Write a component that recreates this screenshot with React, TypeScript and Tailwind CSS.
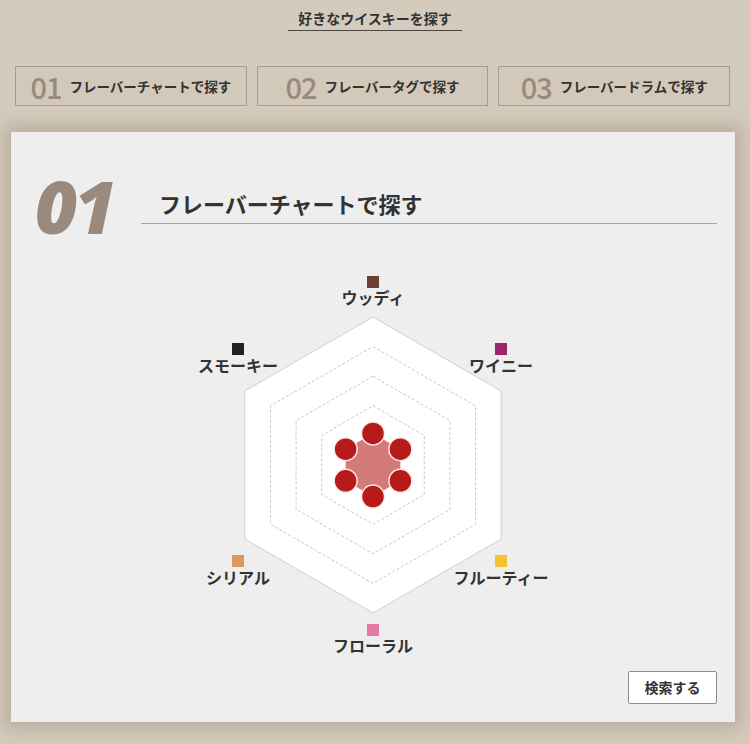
import { useMemo } from 'react';

const JP = '"Noto Sans CJK JP", "Noto Sans", sans-serif';

interface Axis {
  label: string;
  color: string;
  value: number;
}

// clockwise from the top
const AXES: Axis[] = [
  { label: 'ウッディ', color: '#6b3f33', value: 1 },
  { label: 'ワイニー', color: '#9c2668', value: 1 },
  { label: 'フルーティー', color: '#f2c232', value: 1 },
  { label: 'フローラル', color: '#e57aa8', value: 1 },
  { label: 'シリアル', color: '#d99a5c', value: 1 },
  { label: 'スモーキー', color: '#222222', value: 1 },
];

const TABS = [
  { no: '01', label: 'フレーバーチャートで探す' },
  { no: '02', label: 'フレーバータグで探す' },
  { no: '03', label: 'フレーバードラムで探す' },
];

const SIZE = 400;
const CX = 200;
const CY = 200;
const R = 148;
const LEVELS = 5;

function point(i: number, r: number) {
  const a = (Math.PI / 3) * i - Math.PI / 2;
  return [CX + r * Math.cos(a), CY + r * Math.sin(a)];
}

function hexPath(r: number) {
  return AXES.map((_, i) => point(i, r).join(',')).join(' ');
}

function FlavorChart() {
  const data = useMemo(
    () => AXES.map((a, i) => point(i, (R / LEVELS) * a.value + 2)),
    []
  );

  // label anchors (square top-left + text baseline), relative to chart box
  const labels = [
    { sx: 194, sy: 11, tx: 200, ty: 39 },
    { sx: 322, sy: 78, tx: 328, ty: 107 },
    { sx: 322, sy: 290, tx: 328, ty: 319 },
    { sx: 194, sy: 359, tx: 200, ty: 387 },
    { sx: 59, sy: 290, tx: 65, ty: 319 },
    { sx: 59, sy: 78, tx: 65, ty: 107 },
  ];

  return (
    <svg width={SIZE} height={SIZE} viewBox={`0 0 ${SIZE} ${SIZE}`} className="block">
      <polygon points={hexPath(R)} fill="#ffffff" stroke="#cfcfcf" strokeWidth={1} />
      {[4, 3, 2].map((l) => (
        <polygon
          key={l}
          points={hexPath((R / LEVELS) * l)}
          fill="none"
          stroke="#c9c9c9"
          strokeWidth={1}
          strokeDasharray="3 2"
        />
      ))}
      <polygon points={data.map((p) => p.join(',')).join(' ')} fill="#d47b7a" />
      {data.map(([x, y], i) => (
        <circle key={i} cx={x} cy={y} r={11.5} fill="#b71a1a" stroke="#fbe9e7" strokeWidth={1.5} />
      ))}
      {AXES.map((a, i) => (
        <g key={a.label}>
          <rect x={labels[i].sx} y={labels[i].sy} width={12} height={12} fill={a.color} />
          <text
            x={labels[i].tx}
            y={labels[i].ty}
            textAnchor="middle"
            fontFamily={JP}
            fontWeight={700}
            fontSize={16}
            fill="#333333"
          >
            {a.label}
          </text>
        </g>
      ))}
    </svg>
  );
}

export default function App() {
  return (
    <div className="min-h-[744px] bg-[#d4cbbd]" style={{ fontFamily: JP }}>
      {/* Page title */}
      <div className="flex justify-center pt-[9px]">
        <h2 className="border-b border-[#4a4540] px-[10px] pb-[3px] text-[14px] leading-[18px] font-bold text-[#333]">
          好きなウイスキーを探す
        </h2>
      </div>

      {/* Search mode tabs */}
      <div className="mt-[35px] flex gap-[10px] pl-[15px] pr-[20px]">
        {TABS.map((t) => (
          <div
            key={t.no}
            className="flex h-[40px] flex-1 items-center justify-center gap-[8px] border border-[#a69c90] bg-[#d2c9bb]"
          >
            <span className="text-[29px] leading-none font-medium tracking-[-1px] text-[#9b8a7b]">{t.no}</span>
            <span className="text-[13.5px] font-bold text-[#333]">{t.label}</span>
          </div>
        ))}
      </div>

      {/* Chart card */}
      <div className="mt-[26px] ml-[11px] mr-[15px] bg-[#eeeeee] shadow-[0_0_16px_6px_rgba(150,135,115,0.45)] pt-[34px] pb-[18px]">
        <div className="flex items-end pl-[24px] pr-[18px]">
          <span
            className="w-[106px] text-[73px] leading-[80px] font-black italic tracking-[-3px] text-[#9b8a7b]"
            style={{ fontFamily: '"Open Sans", "Liberation Sans", sans-serif' }}
          >
            01
          </span>
          <div className="mb-[22px] flex-1 border-b border-[#aba39c] pl-[18px] pb-[5px]">
            <h3 className="text-[22px] leading-[30px] font-bold text-[#333]">フレーバーチャートで探す</h3>
          </div>
        </div>

        <div className="mt-[19px] flex justify-center">
          <FlavorChart />
        </div>

        <div className="mt-[6px] flex justify-end pr-[18px]">
          <button className="h-[33px] w-[89px] border border-[#8d8d8d] bg-white text-[14px] font-bold text-[#333] rounded-[2px]">
            検索する
          </button>
        </div>
      </div>
    </div>
  );
}
